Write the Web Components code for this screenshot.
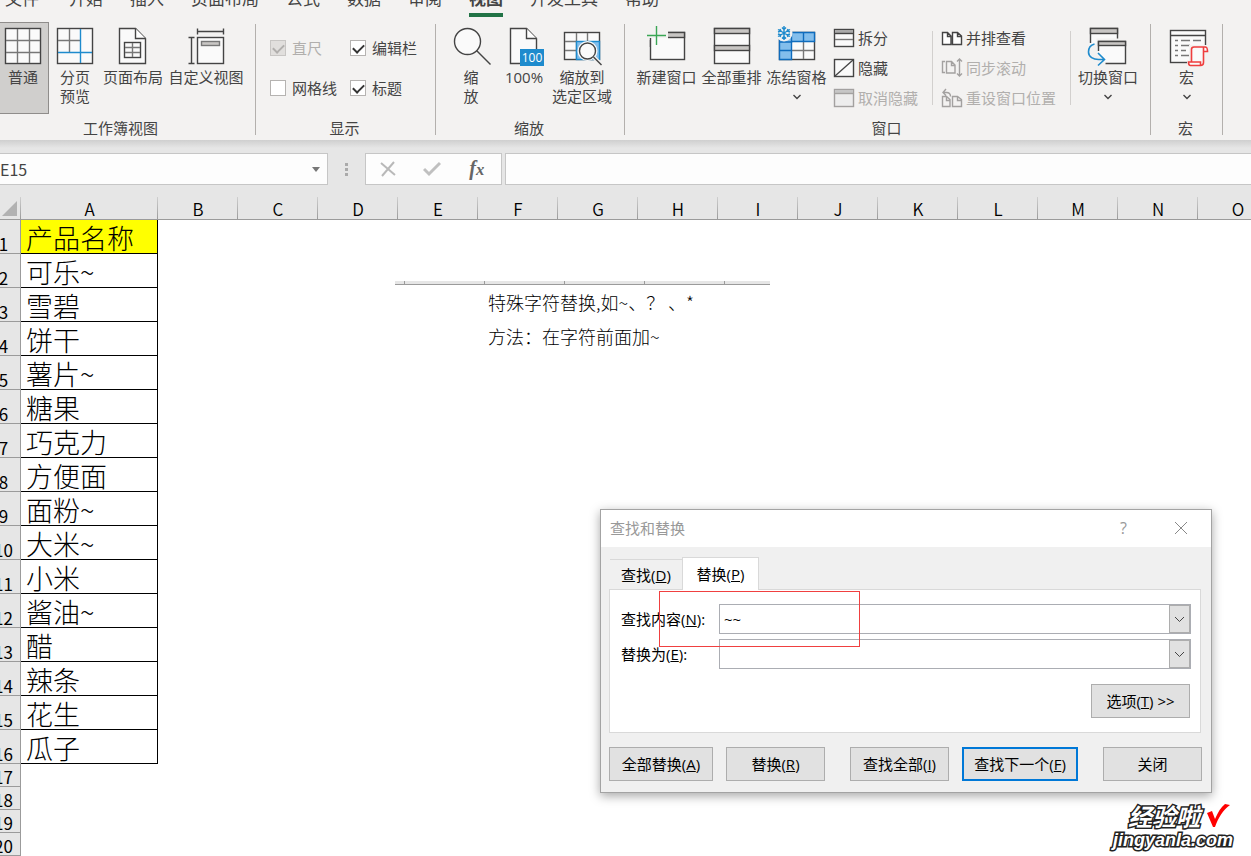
<!DOCTYPE html>
<html lang="zh-CN">
<head>
<meta charset="utf-8">
<title>E15 - 视图</title>
<style>
html, body { margin: 0; height: 100%; }
body {
  font-family: "Open Sans", "Noto Sans CJK SC", sans-serif;
  font-size: 15px;
  color: #444;
  background: #e6e6e6;
  overflow: hidden;
}
</style>
</head>
<body>
<excel-app></excel-app>

<script>
const INK = '#444', GREY = '#777', BLUE = '#1e8bcd', DIM = '#a3a1a0';

/* Large icons are drawn in a 40x40 box, small ones in a 20x20 box. */
const ICONS = {
  normal: `<rect x="2.5" y="1.5" width="35" height="35" fill="#fafafa" stroke="${INK}"/><path d="M14.5 2v34M26.5 2v34M3 13.5h34M3 25.5h34" stroke="${GREY}"/>`,
  breaks: `<rect x="2.5" y="1.5" width="35" height="35" fill="#fafafa" stroke="${INK}"/><path d="M14.5 2v23M3 13.5h22" stroke="${GREY}"/><path d="M25.5 2v34M3 25.5h34" stroke="${BLUE}"/>`,
  layout: `<path d="M6.5 1.5h16l10 10v25h-26z" fill="#fafafa" stroke="${INK}"/><path d="M22.5 1.5v10h10" fill="#fff" stroke="${INK}"/><rect x="11.5" y="15.5" width="16" height="15" stroke="${INK}"/><path d="M19.5 16v14M12 20.5h15M12 25.5h15" stroke="${GREY}"/>`,
  custom: `<path d="M11.5 4.5h26M11.5 1.5v6M37.5 1.5v6M5.5 10.5v26M2.500 10.5h6M2.5 36.5h6" stroke="${INK}"/><rect x="11.5" y="10.5" width="26" height="26" fill="#fafafa" stroke="${INK}"/><rect x="15.5" y="14.5" width="18" height="4" fill="#c8c6c4" stroke="${GREY}"/>`,
  zoom: `<circle cx="16.5" cy="14.5" r="13" fill="#fafafa" stroke="${INK}"/><path d="M25.5 23.5l14 14" stroke="${INK}"/>`,
  hundred: `<path d="M6.5 1.5h16l10 10v25h-26z" fill="#fafafa" stroke="${INK}"/><path d="M22.5 1.5v10h10" fill="#fff" stroke="${INK}"/><rect x="16" y="22" width="24" height="17" fill="${BLUE}" stroke="none"/><text x="28" y="35" text-anchor="middle" font-size="12" fill="#fff" stroke="none">100</text>`,
  selection: `<rect x="2.5" y="5.5" width="35" height="27" fill="#fafafa" stroke="${INK}"/><path d="M14.5 6v8M25.5 6v8M3 14.5h11M3 23.5h11M14.5 14v18" stroke="${GREY}"/><rect x="14.5" y="14.5" width="23" height="18" fill="#83beec" stroke="${BLUE}"/><circle cx="25.5" cy="24" r="10" fill="#fafafa" stroke="none"/><circle cx="25.5" cy="24" r="8" fill="#fafafa" stroke="${INK}"/><path d="M31.5 30l8 8" stroke="#f3f2f1" stroke-width="4"/><path d="M31.5 30l8 8" stroke="${INK}"/>`,
  newwin: `<rect x="3.5" y="5.5" width="34" height="27" fill="#fafafa" stroke="${INK}"/><rect x="3.5" y="5.5" width="34" height="5" fill="#c8c6c4" stroke="${INK}"/><path d="M0 0h21v5h-21z" fill="#f3f2f1" stroke="none"/><path d="M2 4h19v9h-19z" fill="#f3f2f1" stroke="none"/><path d="M4 11h17v9h-17z" fill="#fafafa" stroke="none"/><path d="M3.5 11v9" stroke="${INK}"/><path d="M9.5 -1v19M0 8.5h19" stroke="#3aa655"/>`,
  arrange: `<rect x="2.5" y="1.5" width="35" height="35" fill="#fafafa" stroke="${INK}"/><rect x="2.5" y="1.5" width="35" height="5" fill="#c8c6c4" stroke="${INK}"/><rect x="2.5" y="18.5" width="35" height="5" fill="#c8c6c4" stroke="${INK}"/>`,
  freeze: `<rect x="2.5" y="5.5" width="35" height="27" fill="#fafafa" stroke="${INK}"/><path d="M26.5 15v17M15 23.5h22" stroke="${GREY}"/><path d="M2.5 5.5h35v9h-23v18h-12z" fill="#83beec" stroke="#0f6cbd"/><path d="M14.5 6v9h-12M26.5 6v8M3 23.5h11" stroke="#0f6cbd"/><circle cx="7" cy="6" r="8.5" fill="#f3f2f1" stroke="none"/><path d="M7 -1v14M1 2.5l12 7M13 2.5l-12 7M5 .5l2 2 2-2M5 11.5l2-2 2 2M1 5l3-1-1-2M13 5l-3-1 1-2M1 7l3 1-1 2M13 7l-3 1 1 2" stroke="${BLUE}"/>`,
  switchwin: `<path d="M2.5 17v-15.5h27v10h-21v5z" fill="#fafafa" stroke="none"/><path d="M2.5 16v-14.5h27v10" stroke="${INK}"/><rect x="2.5" y="1.5" width="27" height="5" fill="#c8c6c4" stroke="${INK}"/><path d="M10.5 14.5h27v22h-20l-7-12z" fill="#fafafa" stroke="none"/><path d="M10.5 24v-9.5h27v22h-20" stroke="${INK}"/><rect x="10.5" y="14.5" width="27" height="4" fill="#c8c6c4" stroke="${INK}"/><path d="M6.5 17c-4 1-6 4-6 8 0 5 5 7.5 10 7.500h6M10 26l6.5 6.5-6.5 6" stroke="${BLUE}" stroke-width="1.6"/>`,
  macro: `<rect x="3.5" y="3.5" width="35" height="32" fill="#fafafa" stroke="${INK}"/><path d="M4 8.5h34" stroke="${INK}"/><path d="M8 13.5h3M14 13.5h9M26 13.5h8M8 18.5h3M14 18.5h9M8 23.5h3M14 23.5h5M8 28.5h3M14 28.5h8" stroke="${GREY}"/><path d="M22 18h19v21h-21v-6h2z" fill="#f3f2f1" stroke="none"/><path d="M24.5 35v-12.5c0-2 1-2.5 2.5-2.5h11c2 0 2.5 1 2.5 4.500h-4v11c0 2-1 3-3 3h-10c-1.5 0-2-1-2-3.500h12v3M36.5 24.5v-4" fill="#fafafa" stroke="#ef3e3e" stroke-width="1.6"/>`,
  split: `<rect x=".5" y="1.5" width="19" height="17" fill="#fafafa" stroke="${INK}"/><path d="M1 3.5h18" stroke="#aaa" stroke-width="3"/><path d="M1 5.5h18" stroke="${INK}"/><path d="M1 11.5h18" stroke="${GREY}"/>`,
  hide: `<rect x=".5" y="1.5" width="19" height="17" fill="#fafafa" stroke="${INK}"/><path d="M1 18L19 2" stroke="${INK}"/>`,
  unhide: `<rect x=".5" y="1.5" width="19" height="17" fill="#ededed" stroke="${DIM}"/><path d="M1 3.5h18" stroke="#c6c6c6" stroke-width="3"/><path d="M1 5.5h18" stroke="${DIM}"/>`,
  side: `<path d="M.5 4.5h5l3.500 3.500v8.5h-8.5zM10.5 4.5h5l4 3.500v8.5h-9zM5.5 4.5v4h3.500M15.5 4.5v4h4" fill="#fff" stroke="${INK}"/>`,
  sync: `<path d="M3 3.5h-2.500v11h2.500M4.5 3.5h5l3.500 3.500v8h-8.5zM9.5 3.5v4h3.500M17.5 1v17M15 3.5l2.500-2.500 2.500 2.500M15 15.5l2.500 2.500 2.500-2.500" stroke="${DIM}"/>`,
  reset: `<path d="M.5 8.5h4l3.500 3v7h-7.500zM10.5 8.5h5l4 3v7h-9zM4.5 8.5v4h3.500M15.5 8.5v4h4M8.5 8.5c0-3-1.500-4-4-4h-3.500M4 1l-3 3.500 3 3" stroke="${DIM}"/>`
};

const svg = (name, size) =>
  `<svg width="${size}" height="${size}" viewBox="0 0 ${size} ${size}" fill="none" stroke-width="1.4" aria-hidden="true" overflow="visible">${ICONS[name] || ''}</svg>`;
const CHEVRON = '<svg class="chev" width="10" height="6" viewBox="0 0 10 6" fill="none" aria-hidden="true"><path d="M1.5 1l3.500 3.500L8.5 1" stroke="#444" stroke-width="1.4"/></svg>';

/* Registers an element whose shadow tree is its css plus the markup that render(el) gives. */
function component(name, css, render) {
  customElements.define(name, class extends HTMLElement {
    connectedCallback() {
      if (this.shadowRoot) return;
      const t = document.createElement('template');
      t.innerHTML = `<style>*{box-sizing:border-box}:host{box-sizing:border-box;display:block}button,input{font:inherit;color:inherit;margin:0}button{padding:0;border:0;background:none}${css}</style>${render(this)}`;
      this.attachShadow({ mode: 'open' }).append(t.content.cloneNode(true));
    }
  });
}

component('ribbon-tabs', `
  :host { height: 17px; overflow: hidden; }
  nav { display: flex; align-items: flex-end; height: 17px; gap: 27px; padding-left: 5px; font-size: 17px; }
  a { color: #444; text-decoration: none; line-height: 24px; padding-bottom: 2px; border-bottom: 4px solid transparent; white-space: nowrap; }
  a:first-child { margin-right: 3px; }
  a[aria-current] { font-weight: 700; border-color: #217346; }
`, () => `<nav>${['文件','开始','插入','页面布局','公式','数据','审阅','视图','开发工具','帮助']
  .map(t => `<a href="#"${t === '视图' ? ' aria-current="page"' : ''}>${t}</a>`).join('')}</nav>`);

component('ribbon-group', `
  :host { display: flex; flex-direction: column; flex: none; position: relative; padding-top: 5px; height: 123px; border-right: 1px solid transparent; }
  :host::after { content: ""; position: absolute; right: -1px; top: 7px; bottom: 5px; width: 1px; background: #b3b0ad; }
  .body { height: 92px; display: flex; }
  .name { text-align: center; line-height: 20px; margin-top: 4px; padding-right: var(--label-shift, 2px); }
`, el => `<div class="body"><slot></slot></div><div class="name">${el.getAttribute('name')}</div>`);

component('ribbon-button', `
  :host { flex: none; width: var(--w, 65px); }
  button { display: flex; flex-direction: column; align-items: center; width: 100%; height: 92px; padding-top: 5px; line-height: 19px; white-space: nowrap; }
  svg { display: block; flex: none; }
  .text { margin-top: 1px; }
  .chev { margin-top: 7px; }
  :host([pressed]) button { background: #d0cfcd; border: 1px solid #8f8d8b; border-left: 0; padding: 4px 2px 0 0; }
`, el => `<button type="button">${svg(el.getAttribute('icon'), 40)}<span class="text"><slot></slot></span>${el.hasAttribute('menu') ? CHEVRON : ''}</button>`);

component('ribbon-item', `
  button { display: flex; align-items: center; gap: 4px; height: 30px; line-height: 20px; white-space: nowrap; }
  button:disabled { color: #b1afad; }
`, el => `<button type="button"${el.hasAttribute('disabled') ? ' disabled' : ''}>${svg(el.getAttribute('icon'), 20)}<slot></slot></button>`);

component('ribbon-check', `
  label { display: flex; align-items: center; gap: 6px; height: 40px; line-height: 20px; white-space: nowrap; }
  :host([disabled]) { color: #b1afad; }
  input { appearance: none; display: grid; place-items: center; width: 16px; height: 16px; border: 1px solid #b5b3b1; background: #fff; }
  input:disabled { background: #e1dfdd; border-color: #c8c6c4; }
  input:checked::after { content: ""; width: 9px; height: 5px; margin-top: -2px; border: solid #333; border-width: 0 0 2px 2px; transform: rotate(-45deg); }
  input:checked:disabled::after { border-color: #b1afad; }
`, el => `<label><input type="checkbox"${el.hasAttribute('checked') ? ' checked' : ''}${el.hasAttribute('disabled') ? ' disabled' : ''}><slot></slot></label>`);

component('excel-ribbon', `
  :host { background: #f3f2f1; height: 140px; overflow: hidden; }
  .groups { display: flex; }
  .pad { padding-left: 9px; }
  .workbook { width: 256px; --label-shift: 14px; } .show { width: 180px; } .zoom { width: 189px; } .window { width: 526px; } .macros { width: 72px; }
  .checks { display: grid; grid-template-columns: 80px 80px; align-content: start; padding: 6px 0 0 14px; }
  .stack { display: flex; flex-direction: column; padding: 1px 0 0 5px; width: 103px; }
  .stack.wide { width: 137px; padding-left: 9px; }
  .line { width: 1px; height: 74px; margin-top: 9px; background: #d2d0ce; }
`, () => `
  <ribbon-tabs></ribbon-tabs>
  <div class="groups">
    <ribbon-group class="workbook" name="工作簿视图">
      <ribbon-button icon="normal" pressed style="--w:49px">普通</ribbon-button>
      <ribbon-button icon="breaks" style="--w:52px">分页<br>预览</ribbon-button>
      <ribbon-button icon="layout" style="--w:64px">页面布局</ribbon-button>
      <ribbon-button icon="custom" style="--w:82px">自定义视图</ribbon-button>
    </ribbon-group>
    <ribbon-group class="show" name="显示">
      <div class="checks">
        <ribbon-check checked disabled>直尺</ribbon-check><ribbon-check checked>编辑栏</ribbon-check>
        <ribbon-check>网格线</ribbon-check><ribbon-check checked>标题</ribbon-check>
      </div>
    </ribbon-group>
    <ribbon-group class="zoom" name="缩放">
      <div class="pad"></div>
      <ribbon-button icon="zoom" style="--w:52px">缩<br>放</ribbon-button>
      <ribbon-button icon="hundred" style="--w:54px">100%</ribbon-button>
      <ribbon-button icon="selection" style="--w:62px">缩放到<br>选定区域</ribbon-button>
    </ribbon-group>
    <ribbon-group class="window" name="窗口">
      <div class="pad"></div>
      <ribbon-button icon="newwin">新建窗口</ribbon-button>
      <ribbon-button icon="arrange">全部重排</ribbon-button>
      <ribbon-button icon="freeze" menu>冻结窗格</ribbon-button>
      <div class="stack">
        <ribbon-item icon="split">拆分</ribbon-item>
        <ribbon-item icon="hide">隐藏</ribbon-item>
        <ribbon-item icon="unhide" disabled>取消隐藏</ribbon-item>
      </div>
      <div class="line"></div>
      <div class="stack wide">
        <ribbon-item icon="side">并排查看</ribbon-item>
        <ribbon-item icon="sync" disabled>同步滚动</ribbon-item>
        <ribbon-item icon="reset" disabled>重设窗口位置</ribbon-item>
      </div>
      <div class="line"></div>
      <ribbon-button icon="switchwin" menu style="--w:74px">切换窗口</ribbon-button>
    </ribbon-group>
    <ribbon-group class="macros" name="宏">
      <ribbon-button icon="macro" menu style="--w:71px">宏</ribbon-button>
    </ribbon-group>
  </div>`);

component('formula-bar', `
  :host { display: flex; padding: 13px 0 12px; background: linear-gradient(#cfcfcf, #e6e6e6 8px); font-family: "Noto Sans CJK SC", sans-serif; }
  .box { height: 32px; border: 1px solid #c6c6c6; background: #fdfdfd; display: flex; align-items: center; }
  .name { width: 328px; border-left: 0; padding-right: 6px; }
  input { border: 0; outline: 0; background: none; padding: 0; min-width: 0; flex: 1; font-size: 16px; color: #444; }
  .grip { width: 37px; display: grid; place-content: center; gap: 2px; }
  .grip i { width: 3px; height: 3px; background: #aaa; }
  .tools { width: 137px; justify-content: space-around; margin-right: 3px; padding-right: 2px; }
  .tools button { width: 32px; height: 28px; display: grid; place-items: center; }
  .entry { flex: 1; border-right: 0; }
  .tools .fx { font: italic 700 20px "Liberation Serif", serif; color: #666; padding-bottom: 2px; }
`, () => `
  <div class="box name"><input aria-label="名称框" value="E15"><button type="button" aria-label="名称列表"><svg width="9" height="5" viewBox="0 0 9 5" style="display:block"><path d="M0 0h8L4 5z" fill="#777"/></svg></button></div>
  <div class="grip"><i></i><i></i><i></i></div>
  <div class="box tools">
    <button type="button" aria-label="取消"><svg width="16" height="16" viewBox="0 0 16 16" fill="none" stroke="#b9b9b9" stroke-width="2"><path d="M1 2l14 12M14 1L2 15"/></svg></button>
    <button type="button" aria-label="输入"><svg width="18" height="16" viewBox="0 0 18 16" fill="none" stroke="#c0c0c0" stroke-width="3"><path d="M1 8l5 5L17 2"/></svg></button>
    <button type="button" class="fx" aria-label="插入函数"><span>f<small>x</small></span></button>
  </div>
  <div class="box entry"><input aria-label="编辑栏"></div>`);

const PRODUCTS = ['产品名称','可乐~','雪碧','饼干','薯片~','糖果','巧克力','方便面','面粉~','大米~','小米','酱油~','醋','辣条','花生','瓜子'];
const COLUMNS = [...'ABCDEFGHIJKLMNO'];

component('sheet-grid', `
  :host { flex: 1; min-height: 0; overflow: hidden; background: linear-gradient(#e6e6e6 22px, #9b9b9b 22px 23px, #fff 23px); font-family: "Noto Sans CJK SC", sans-serif; color: #000; }
  table { border-collapse: separate; border-spacing: 0; table-layout: fixed; width: 1278px; }
  th, td { padding: 0; font-weight: 400; white-space: nowrap; }
  col.rows { width: 21px; } col.a { width: 137px; }
  thead th { height: 23px; line-height: 20px; font-size: 17px; font-weight: 350; background: linear-gradient(#cfcfcf, #9b9b9b) right / 1px 100% no-repeat #e6e6e6; border-bottom: 1px solid #9b9b9b; padding-top: 2px; }
  .corner svg { display: block; margin-left: 2px; }
  tbody th { height: 23px; background: #e6e6e6; border: solid #9b9b9b; border-width: 0 1px 1px 0; font-size: 17px; line-height: 18px; vertical-align: bottom; }
  tbody th div { display: flex; justify-content: center; padding-right: 13px; width: 20px; }
  tr.data th { height: 34px; }
  tr.data td:nth-child(2) { border: solid #000; border-width: 0 1px 1px 0; font-size: 27px; line-height: 33px; padding-left: 5px; }
  tr.data td div { height: 33px; padding-top: 1px; font-weight: 300; }
  tr.head td:nth-child(2) { background: #ff0; }
`, () => `
  <table><colgroup><col class="rows"><col class="a">${'<col>'.repeat(14)}</colgroup>
  <thead><tr><th class="corner"><svg width="16" height="16" viewBox="0 0 16 16" aria-hidden="true"><path d="M15 0v15H0z" fill="#b2b2b2"/></svg></th>${COLUMNS.map(c => `<th scope="col">${c}</th>`).join('')}</tr></thead>
  <tbody>${Array.from({ length: 20 }, (_, i) => {
    const p = PRODUCTS[i];
    return `<tr class="${p ? 'data' : ''}${i ? '' : ' head'}"><th scope="row"><div>${i + 1}</div></th>${p ? `<td><div>${p}</div></td>` : '<td></td>'}</tr>`;
  }).join('')}</tbody></table>`);

component('sheet-note', `
  :host { position: absolute; left: 395px; top: 281px; width: 375px; font: 300 18px/34px "Noto Sans CJK SC", sans-serif; color: #000; }
  .edge { height: 4px; border-bottom: 1px solid #9b9b9b; background: repeating-linear-gradient(90deg, #9b9b9b 0 1px, #e6e6e6 1px 80px) 9px 0; }
  p { margin: 0 0 0 93px; white-space: pre; }
`, () => `<div class="edge"></div><p>特殊字符替换,如~、？ 、*</p><p>方法：在字符前面加~</p>`);

component('dialog-button', `
  :host { flex: none; width: var(--w, 99px); }
  button { width: 100%; height: 34px; border: 1px solid #adadad; background: #e1e1e1; color: #000; white-space: nowrap; }
  :host([primary]) button { border: 2px solid #0078d7; }
`, () => `<button type="button"><slot></slot></button>`);

component('combo-field', `
  :host { display: flex; align-items: center; height: 30px; color: #000; }
  label { width: 98px; flex: none; white-space: nowrap; }
  .box { flex: 1; height: 30px; display: flex; border: 1px solid #abadb3; background: #fff; }
  input { flex: 1; min-width: 0; border: 0; outline: 0; padding: 0 4px; background: none; }
  button { width: 21px; border: 1px solid #adadad; background: #e1e1e1; display: grid; place-items: center; }
`, el => `<label for="f">${el.getAttribute('label')}(<u>${el.getAttribute('key')}</u>):</label>
  <div class="box"><input id="f" value="${el.getAttribute('value') || ''}"><button type="button" aria-label="历史记录"><svg width="11" height="7" viewBox="0 0 11 7" fill="none"><path d="M1 1l4.500 4.500L10 1" stroke="#444"/></svg></button></div>`);

component('find-dialog', `
  :host { position: absolute; left: 600px; top: 509px; width: 612px; background: #f0f0f0; border: 1px solid #a3a3a3; box-shadow: 0 3px 10px rgba(0,0,0,.35); color: #000; line-height: 20px; }
  header { display: flex; align-items: center; height: 37px; padding: 0 2px 2px 9px; background: #fff; color: #999; }
  h2 { flex: 1; margin: 0; font-size: 15px; font-weight: 400; }
  header button { width: 57px; height: 34px; display: grid; place-items: center; font-size: 16px; }
  .tabs { display: flex; align-items: flex-end; padding: 10px 0 0 9px; }
  .tabs button { height: 30px; width: 72px; border-top: 1px solid #d9d9d9; }
  .tabs button[aria-selected=true] { width: 77px; height: 33px; margin-bottom: -1px; padding-bottom: 1px; background: #fff; border: 1px solid #d9d9d9; border-bottom: 0; position: relative; }
  .panel { margin: 0 10px 0 8px; height: 144px; padding: 14px 9px 0 11px; border: 1px solid #d9d9d9; background: #fff; display: flex; flex-direction: column; gap: 5px; }
  .panel dialog-button { align-self: flex-end; margin: 10px 1px 0 0; }
  footer { display: flex; gap: 13px; padding: 14px 8px 11px; }
  .far { margin-left: 12px; }
`, () => `
  <header><h2>查找和替换</h2><button type="button" aria-label="帮助">?</button><button type="button" aria-label="关闭"><svg width="14" height="14" viewBox="0 0 14 14" fill="none"><path d="M1 1l12 12M13 1L1 13" stroke="#888"/></svg></button></header>
  <div class="tabs" role="tablist"><button type="button" role="tab" aria-selected="false">查找(<u>D</u>)</button><button type="button" role="tab" aria-selected="true">替换(<u>P</u>)</button></div>
  <div class="panel">
    <combo-field label="查找内容" key="N" value="~~"></combo-field>
    <combo-field label="替换为" key="E"></combo-field>
    <dialog-button>选项(<u>T</u>) &gt;&gt;</dialog-button>
  </div>
  <footer>
    <dialog-button style="--w:104px">全部替换(<u>A</u>)</dialog-button>
    <dialog-button>替换(<u>R</u>)</dialog-button>
    <dialog-button class="far">查找全部(<u>I</u>)</dialog-button>
    <dialog-button primary style="--w:116px">查找下一个(<u>F</u>)</dialog-button>
    <dialog-button class="far">关闭</dialog-button>
  </footer>`);

component('red-frame', `:host { position: absolute; left: 659px; top: 591px; width: 201px; height: 56px; border: 1px solid #f04040; pointer-events: none; }`, () => '');

component('brand-mark', `
  :host { position: absolute; right: 15px; bottom: 5px; width: 125px; color: #fff; font-style: italic; font-weight: 700; }
  div { -webkit-text-stroke: 3px #222; paint-order: stroke fill; white-space: nowrap; }
  .top { display: flex; align-items: center; padding-left: 17px; gap: 6px; height: 26px; font: italic 700 24px/26px "Noto Sans CJK SC", sans-serif; }
  .site { padding-left: 2px; font: italic 700 18px/22px "Liberation Sans", sans-serif; }
`, () => `<div class="top"><span>经验啦</span><svg width="24" height="24" viewBox="0 0 24 24" aria-hidden="true"><path d="M1 9l5-2 3 8C12 8 15 3 19 0l5 1C17 6 12 14 9 23H7z" fill="#f00"/></svg></div><div class="site">jingyanla.com</div>`);

component('excel-app', `
  :host { display: flex; flex-direction: column; position: relative; height: 100vh; overflow: hidden; }
`, () => `<excel-ribbon></excel-ribbon><formula-bar></formula-bar><sheet-grid></sheet-grid><sheet-note></sheet-note><find-dialog></find-dialog><red-frame></red-frame><brand-mark></brand-mark>`);
</script>
</body>
</html>
